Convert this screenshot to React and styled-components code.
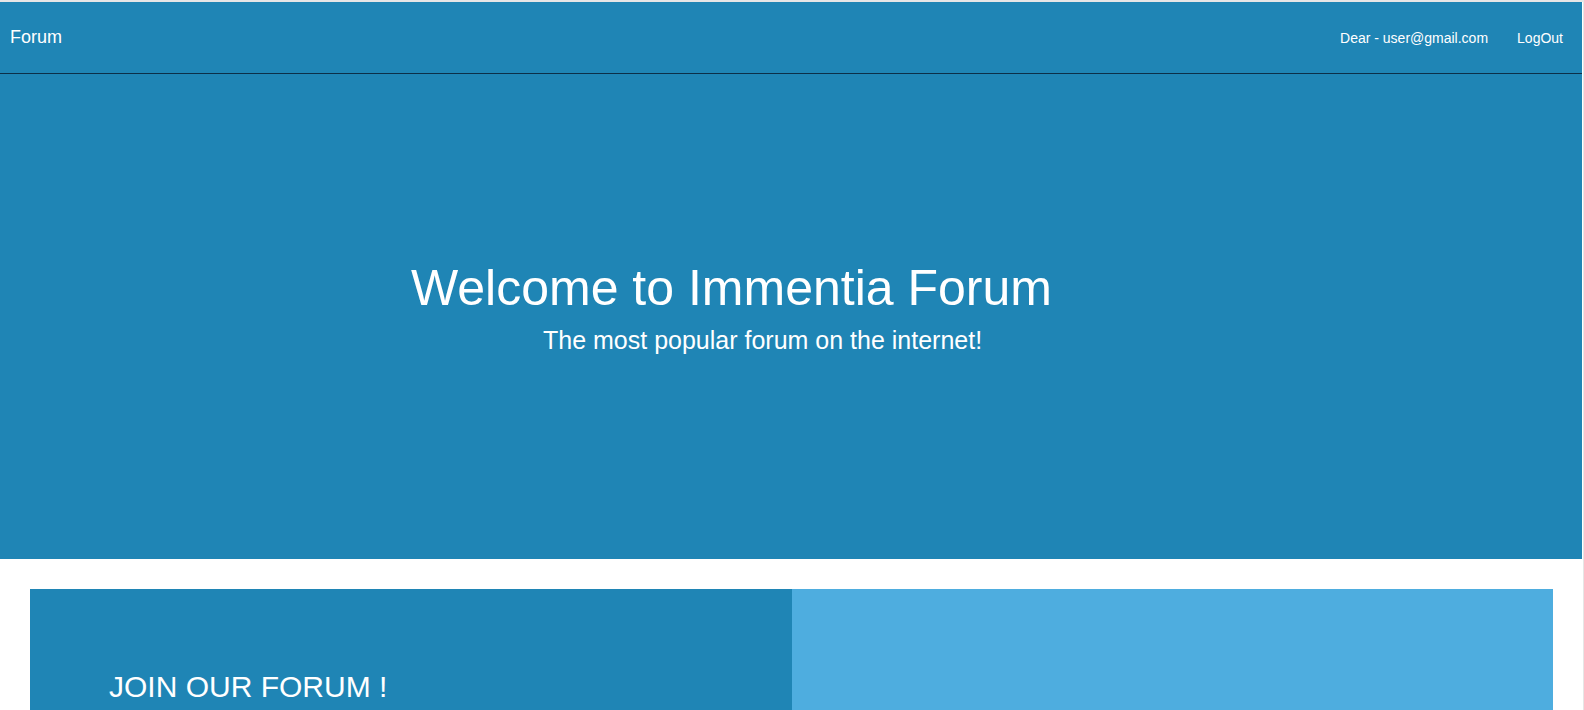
import React from 'react';
import styled, { createGlobalStyle } from 'styled-components';

const GlobalStyle = createGlobalStyle`
  html, body {
    margin: 0;
    padding: 0;
  }
  body {
    background: #e6e6e6;
    padding-top: 2px;
    padding-right: 1px;
    font-family: "Liberation Sans", Arial, sans-serif;
  }
`;

const Page = styled.div`
  background: #ffffff;
  min-height: 708px;
`;

// Top navigation bar
const NavBar = styled.nav`
  display: flex;
  align-items: center;
  justify-content: space-between;
  height: 71px;
  margin-right: 1px;
  padding: 0 19px 0 10px;
  background: #1f85b5;
  border-bottom: 1px solid #0c2f48;
  color: #ffffff;
`;

const Brand = styled.a`
  font-size: 18px;
  color: #ffffff;
  text-decoration: none;
`;

const NavLinks = styled.div`
  display: flex;
  align-items: center;
  gap: 29px;
`;

const NavItem = styled.a`
  font-size: 14px;
  color: #ffffff;
  text-decoration: none;
  cursor: ${(p) => (p.$link ? 'pointer' : 'default')};
`;

// Hero section
const Hero = styled.header`
  display: flex;
  flex-direction: column;
  align-items: flex-start;
  height: 485px;
  box-sizing: border-box;
  margin-right: 1px;
  padding: 189px 0 0 411px;
  background: #1f85b5;
  color: #ffffff;

  h1 {
    margin: 0;
    font-size: 50px;
    font-weight: normal;
    line-height: 1;
  }

  p {
    margin: 15px 0 0 132px;
    font-size: 25px;
    line-height: 1;
  }
`;

// Join section
const Section = styled.section`
  padding: 30px 30px 0 30px;
`;

const Split = styled.div`
  display: grid;
  grid-template-columns: 762px 1fr;
  height: 320px;
`;

const Panel = styled.div`
  background: ${(p) => (p.$light ? '#4eaddf' : '#1f85b5')};
  color: #ffffff;
  padding: 83px 0 0 79px;
  box-sizing: border-box;

  h2 {
    margin: 0;
    font-size: 30px;
    font-weight: normal;
    line-height: 1;
  }
`;

const App = () => {
  return (
    <Page>
      <GlobalStyle />
      <NavBar>
        <Brand href="#">Forum</Brand>
        <NavLinks>
          <NavItem>Dear - user@gmail.com</NavItem>
          <NavItem $link href="#">LogOut</NavItem>
        </NavLinks>
      </NavBar>

      <Hero>
        <h1>Welcome to Immentia Forum</h1>
        <p>The most popular forum on the internet!</p>
      </Hero>

      <Section>
        <Split>
          <Panel>
            <h2>JOIN OUR FORUM !</h2>
          </Panel>
          <Panel $light />
        </Split>
      </Section>
    </Page>
  );
};

export default App;
